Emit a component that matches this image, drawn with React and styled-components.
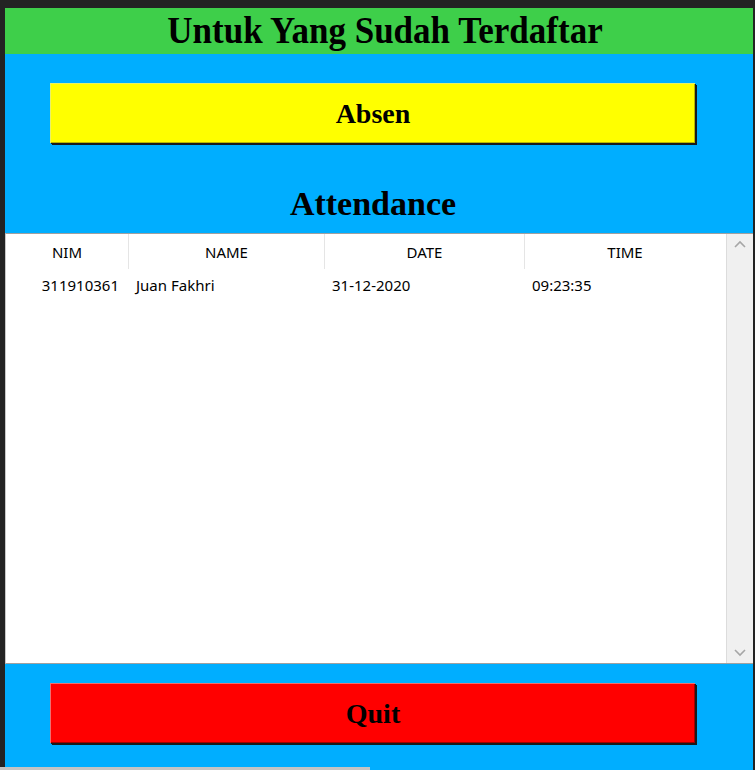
import styled, { createGlobalStyle } from "styled-components";

const GlobalStyle = createGlobalStyle`
  html, body {
    margin: 0;
    padding: 0;
    background: #232323;
  }
`;

const Frame = styled.div`
  width: 755px;
  height: 770px;
  padding: 8px 2px 0 5px;
  box-sizing: border-box;
  display: flex;
  flex-direction: column;
  position: relative;
`;

const Window = styled.div`
  flex: 1;
  background: #00aeff;
  display: flex;
  flex-direction: column;
`;

const TitleBar = styled.div`
  height: 46px;
  background: #3ecf4a;
  display: flex;
  align-items: center;
  justify-content: center;
  padding-left: 12px;
`;

const Title = styled.h1`
  margin: 0;
  font-family: "Liberation Serif", "Times New Roman", serif;
  font-weight: bold;
  font-size: 35px;
  color: #000;
  transform: scaleY(1.08);
`;

const BigButton = styled.button`
  height: 60px;
  margin: ${(p) => p.$margin};
  background: ${(p) => p.$bg};
  border: none;
  border-top: 1px solid ${(p) => p.$light};
  border-left: 1px solid ${(p) => p.$light};
  box-shadow: inset -1px -1px 0 ${(p) => p.$shade}, 1px 1px 0 #1a1a1a,
    2px 2px 0 #1a1a1a;
  font-family: "Liberation Serif", "Times New Roman", serif;
  font-weight: bold;
  font-size: 28px;
  color: #000;
  cursor: pointer;
  display: flex;
  align-items: center;
  justify-content: center;
`;

const Heading = styled.h2`
  margin: 0;
  height: 90px;
  box-sizing: border-box;
  display: flex;
  align-items: flex-end;
  justify-content: center;
  padding: 0 12px 10px 0;
  font-family: "Liberation Serif", "Times New Roman", serif;
  font-weight: bold;
  font-size: 34px;
  color: #000;
`;

const TableBox = styled.div`
  height: 429px;
  background: #fff;
  border-top: 1px solid #a0a0a0;
  border-bottom: 1px solid #a0a0a0;
  border-left: 1px solid #c8c8c8;
  display: flex;
`;

const TableBody = styled.div`
  flex: 1;
  display: flex;
  flex-direction: column;
`;

const Row = styled.div`
  display: grid;
  grid-template-columns: 123px 196px 200px 200px;
  font-family: "Noto Sans", "Open Sans", sans-serif;
  font-size: 15px;
  color: #000;
`;

const HeadCell = styled.div`
  height: 35px;
  display: flex;
  align-items: center;
  justify-content: center;
  border-right: 1px solid #e5e5e5;
  &:last-child {
    border-right: none;
  }
`;

const Cell = styled.div`
  height: 32px;
  display: flex;
  align-items: center;
  justify-content: ${(p) => (p.$right ? "flex-end" : "flex-start")};
  padding: ${(p) => (p.$right ? "0 10px 0 0" : "0 0 0 7px")};
`;

const Scrollbar = styled.div`
  width: 26px;
  background: #f0f0f0;
  border-left: 1px solid #dcdcdc;
  display: flex;
  flex-direction: column;
  justify-content: space-between;
  align-items: center;
  padding: 6px 0;
`;

const Arrow = ({ up }) => (
  <svg width="12" height="8" viewBox="0 0 12 8">
    <path
      d={up ? "M1 7 L6 2 L11 7" : "M1 1 L6 6 L11 1"}
      fill="none"
      stroke="#a6a6a6"
      strokeWidth="1.6"
    />
  </svg>
);

const BottomStrip = styled.div`
  position: absolute;
  left: 0;
  bottom: 0;
  width: 370px;
  height: 3px;
  background: #c4c4c4;
`;

const rows = [
  { nim: "311910361", name: "Juan Fakhri", date: "31-12-2020", time: "09:23:35" },
];

export default function App() {
  return (
    <>
      <GlobalStyle />
      <Frame>
        <Window>
          <TitleBar>
            <Title>Untuk Yang Sudah Terdaftar</Title>
          </TitleBar>
          <BigButton
            $margin="29px 58px 0 45px"
            $bg="#ffff00"
            $light="#e8f06a"
            $shade="#b5b500"
          >
            Absen
          </BigButton>
          <Heading>Attendance</Heading>
          <TableBox>
            <TableBody>
              <Row>
                <HeadCell>NIM</HeadCell>
                <HeadCell>NAME</HeadCell>
                <HeadCell>DATE</HeadCell>
                <HeadCell>TIME</HeadCell>
              </Row>
              {rows.map((r) => (
                <Row key={r.nim}>
                  <Cell $right>{r.nim}</Cell>
                  <Cell>{r.name}</Cell>
                  <Cell>{r.date}</Cell>
                  <Cell>{r.time}</Cell>
                </Row>
              ))}
            </TableBody>
            <Scrollbar>
              <Arrow up />
              <Arrow />
            </Scrollbar>
          </TableBox>
          <BigButton
            $margin="19px 58px 0 45px"
            $bg="#ff0000"
            $light="#f07070"
            $shade="#a00000"
          >
            Quit
          </BigButton>
        </Window>
        <BottomStrip />
      </Frame>
    </>
  );
}
